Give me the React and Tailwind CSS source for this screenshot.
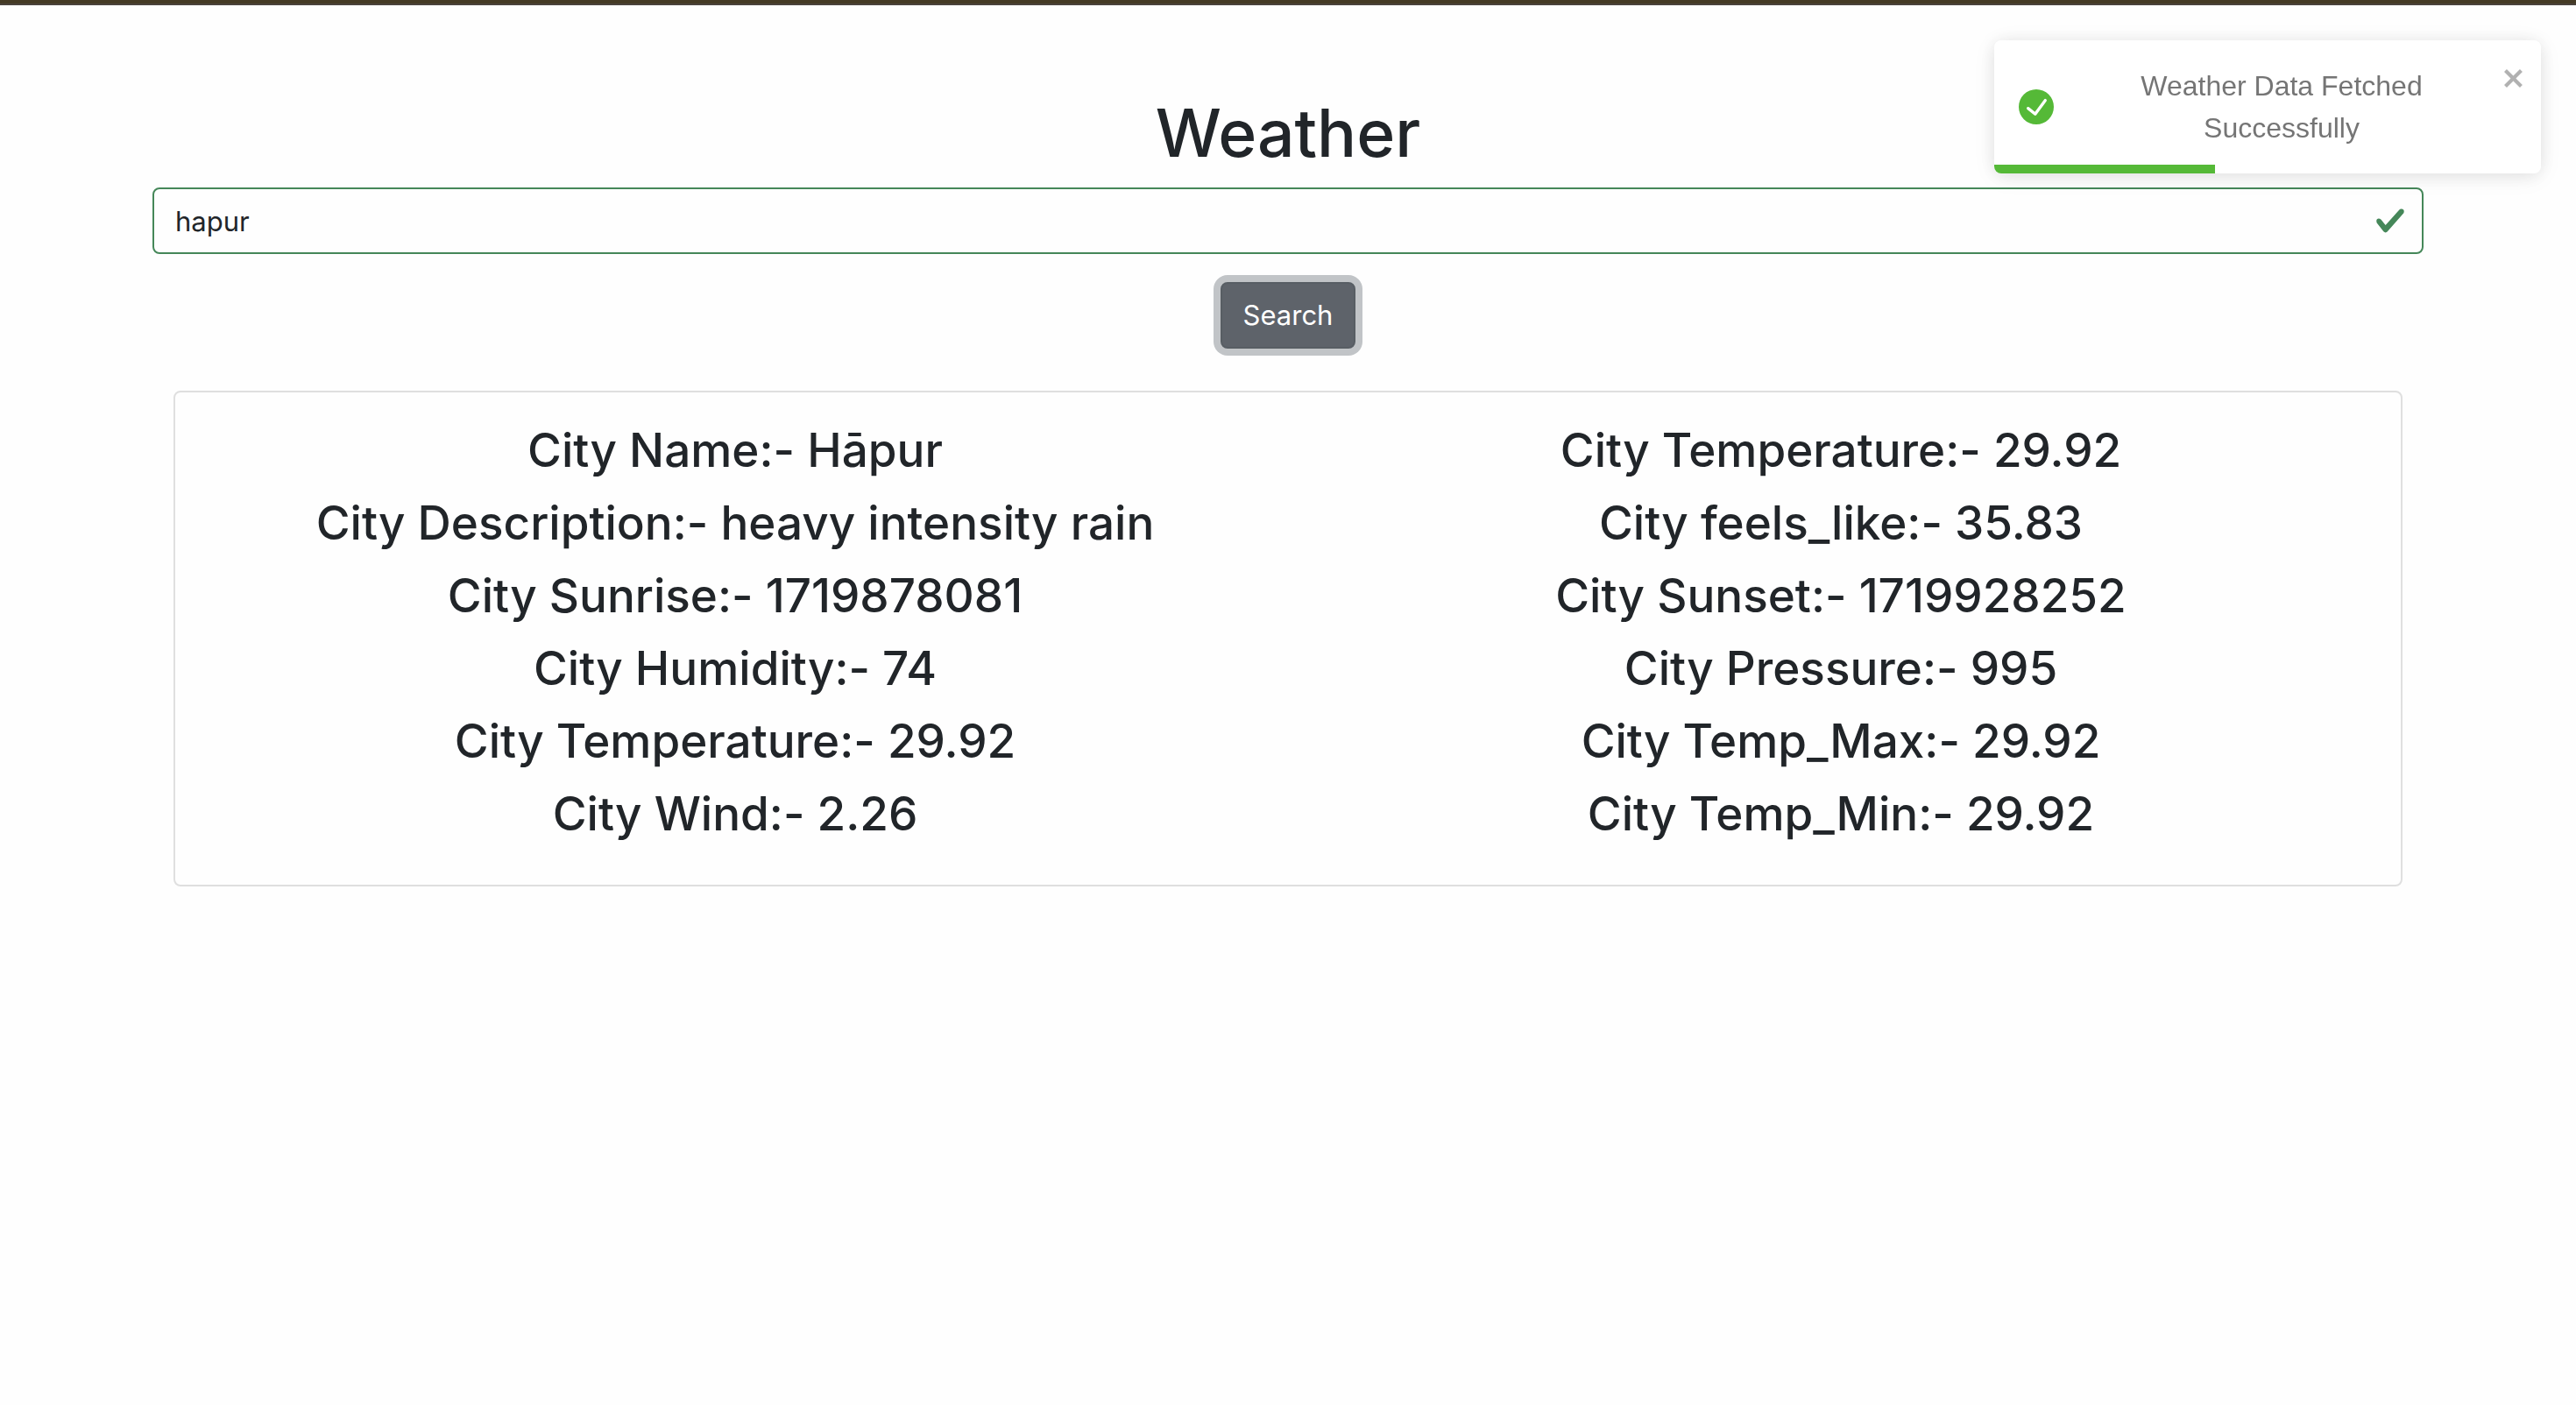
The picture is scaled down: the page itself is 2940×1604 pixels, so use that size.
import { useState } from "react";

const leftColumn = [
  ["City Name", "Hāpur"],
  ["City Description", "heavy intensity rain"],
  ["City Sunrise", "1719878081"],
  ["City Humidity", "74"],
  ["City Temperature", "29.92"],
  ["City Wind", "2.26"],
];

const rightColumn = [
  ["City Temperature", "29.92"],
  ["City feels_like", "35.83"],
  ["City Sunset", "1719928252"],
  ["City Pressure", "995"],
  ["City Temp_Max", "29.92"],
  ["City Temp_Min", "29.92"],
];

function Column({ items }) {
  return (
    <div className="flex-1 px-6 text-center">
      {items.map(([label, value]) => (
        <h3 key={label} className="mb-[15px] text-[53px] leading-[68px] font-medium">
          {label}:- {value}
        </h3>
      ))}
    </div>
  );
}

function Toast({ onClose }) {
  return (
    <div
      role="alert"
      className="fixed top-[46px] right-10 flex w-[624px] items-start overflow-hidden rounded-lg bg-white p-4 font-['Liberation_Sans',Arial,sans-serif] text-[32px] leading-12 text-[#757575] shadow-[0_2px_20px_rgba(0,0,0,0.1),0_4px_30px_rgba(0,0,0,0.05)]"
    >
      <div className="flex flex-1 items-center gap-5 p-3">
        <svg viewBox="0 0 24 24" className="size-10 shrink-0 fill-[#55b937]" aria-hidden="true">
          <path d="M12 0a12 12 0 1012 12A12.014 12.014 0 0012 0zm6.927 8.2l-6.845 9.289a1.011 1.011 0 01-1.43.188l-4.888-3.908a1 1 0 111.25-1.562l4.076 3.261 6.227-8.451a1 1 0 111.61 1.183z" />
        </svg>
        <div className="flex-1 text-center">Weather Data Fetched Successfully</div>
      </div>
      <button type="button" aria-label="close" onClick={onClose} className="mt-[11px] opacity-30">
        <svg viewBox="0 0 14 16" className="h-8 w-7 fill-black" aria-hidden="true">
          <path d="M7.71 8.23l3.75 3.75-1.48 1.48-3.75-3.75-3.75 3.75L1 11.98l3.75-3.75L1 4.48 2.48 3l3.75 3.75L9.98 3l1.48 1.48-3.75 3.75z" />
        </svg>
      </button>
      <div className="absolute bottom-0 left-0 h-[10px] w-[252px] bg-[#55b937]" />
    </div>
  );
}

export default function App() {
  const [city, setCity] = useState("hapur");
  const [open, setOpen] = useState(true);

  return (
    <div className="min-h-screen bg-[#fefefe] font-[Inter,sans-serif] text-[31px] leading-12 text-[#212529]">
      <div className="h-[6px] border-b-2 border-[#4a423c] bg-[#443a25]" />
      <main className="mx-auto max-w-[2640px] px-6 pt-24">
        <form className="flex flex-col items-center" onSubmit={(e) => e.preventDefault()}>
          <h1 className="mb-3 text-[75px] leading-[100px] font-medium">
            <label htmlFor="city">Weather</label>
          </h1>
          <div className="relative w-full">
            <input
              id="city"
              type="text"
              value={city}
              onChange={(e) => setCity(e.target.value)}
              className="block h-[76px] w-full rounded-lg border-2 border-[#458759] bg-transparent pr-20 pl-6 outline-none"
            />
            <svg
              viewBox="0 0 8 8"
              className="absolute top-5 right-5 size-9 fill-[#458759]"
              aria-hidden="true"
            >
              <path d="M2.3 6.73.6 4.53c-.4-1.04.46-1.4 1.1-.8l1.1 1.4 3.4-3.8c.6-.63 1.6-.27 1.2.7l-4 4.6c-.43.5-.8.4-1.1.1z" />
            </svg>
          </div>
          <button
            type="submit"
            className="mt-8 h-[76px] rounded-lg border-2 border-[#585e64] bg-[#5e636a] px-6 text-white shadow-[0_0_0_8px_#c1c4c7]"
          >
            Search
          </button>
        </form>
        <section className="mx-6 mt-12 flex rounded-lg border-2 border-[#dfdfdf] px-2 py-8">
          <Column items={leftColumn} />
          <Column items={rightColumn} />
        </section>
      </main>
      {open && <Toast onClose={() => setOpen(false)} />}
    </div>
  );
}
